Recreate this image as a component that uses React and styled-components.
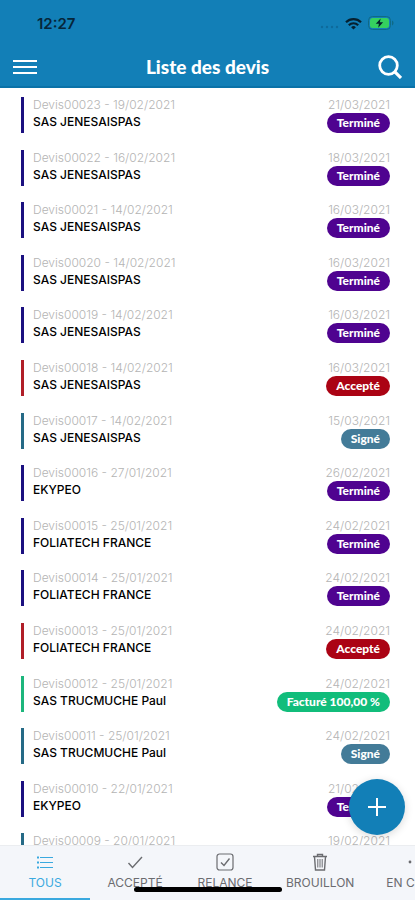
import React, { useState } from 'react';
import styled, { createGlobalStyle } from 'styled-components';

const GlobalStyle = createGlobalStyle`
  * {
    box-sizing: border-box;
  }

  body {
    margin: 0;
    background-color: #ffffff;
    font-family: Inter, "Liberation Sans", sans-serif;
  }

  button {
    border: none;
    padding: 0;
    background: none;
    font-family: inherit;
    cursor: pointer;
  }
`;

const Screen = styled.div`
  display: flex;
  flex-direction: column;
  min-height: 100vh;
`;

const Header = styled.header`
  position: sticky;
  top: 0;
  z-index: 1;
  background-color: #127fb7;
  border-bottom: 2px solid #0a72a8;
`;

const StatusBar = styled.div`
  display: flex;
  justify-content: space-between;
  align-items: center;
  height: 46px;
  padding: 0 21px 0 37px;
`;

const Clock = styled.span`
  font-size: 15px;
  font-weight: 600;
  color: #06263a;
`;

const StatusIcons = styled.div`
  display: flex;
  align-items: center;
  gap: 6px;
`;

const TitleBar = styled.div`
  display: grid;
  grid-template-columns: 26px 1fr 26px;
  align-items: center;
  height: 40px;
  padding: 2px 12px 0;
`;

const Title = styled.h1`
  margin: 0;
  text-align: center;
  font-family: Lato, sans-serif;
  font-size: 19px;
  font-weight: 900;
  line-height: 24px;
  color: #ffffff;
`;

const IconButton = styled.button`
  display: flex;
  justify-content: center;
  align-items: center;
  height: 26px;
  color: #ffffff;
`;

const List = styled.ul`
  display: flex;
  flex: 1;
  flex-direction: column;
  margin: 0;
  padding: 9px 25px 14px 21px;
  list-style: none;
`;

const Row = styled.li`
  display: flex;
  flex: 1;
  align-items: flex-start;
  min-height: 52px;
`;

const RowContent = styled.div`
  display: flex;
  flex: 1;
  justify-content: space-between;
  height: 36px;
  padding-left: 9px;
  border-left: 3px solid ${(props) => props.$color};
`;

const Column = styled.div`
  display: flex;
  flex-direction: column;
  align-items: ${(props) => props.$align};
`;

const Muted = styled.span`
  font-size: 12px;
  font-weight: 300;
  line-height: 16px;
  color: #b4b4b4;
`;

const Client = styled.span`
  font-size: 12px;
  font-weight: 500;
  line-height: 18px;
  color: #000000;
`;

const Badge = styled.span`
  height: 20px;
  padding: 0 10px;
  border-radius: 10px;
  background-color: ${(props) => props.$color};
  font-family: Lato, sans-serif;
  font-size: 12px;
  font-weight: 900;
  line-height: 20px;
  color: #ffffff;
`;

const AddButton = styled.button`
  position: fixed;
  right: 10px;
  bottom: 65px;
  z-index: 1;
  display: flex;
  justify-content: center;
  align-items: center;
  width: 56px;
  height: 56px;
  border-radius: 28px;
  background-color: #127fb7;
  box-shadow: 0 2px 8px rgba(0, 0, 0, 0.15);
  color: #ffffff;
`;

const TabBar = styled.nav`
  position: fixed;
  right: 0;
  bottom: 0;
  left: 0;
  display: flex;
  overflow: hidden;
  background-color: #f4f6fa;
  border-top: 1px solid #ebedf0;
`;

const Tab = styled.button`
  display: flex;
  flex-direction: column;
  flex-shrink: 0;
  align-items: center;
  gap: 3px;
  min-width: 90px;
  height: 54px;
  padding: 6px 16px 0;
  border-bottom: 2px solid ${(props) => (props.$active ? '#3aa9df' : 'transparent')};
  font-size: 12px;
  line-height: 16px;
  color: ${(props) => (props.$active ? '#3aa9df' : '#6b6c70')};
`;

const HomeIndicator = styled.div`
  position: fixed;
  bottom: 8px;
  left: 50%;
  width: 148px;
  height: 5px;
  margin-left: -74px;
  border-radius: 3px;
  background-color: #000000;
`;

const COLORS = {
  termine: { bar: '#1b1080', badge: '#4f0390' },
  accepte: { bar: '#b01e28', badge: '#ab0314' },
  signe: { bar: '#256a86', badge: '#437b98' },
  facture: { bar: '#1cb67c', badge: '#11bd7b' },
};

const LABELS = {
  termine: 'Terminé',
  accepte: 'Accepté',
  signe: 'Signé',
  facture: 'Facturé 100,00 %',
};

const quotes = [
  { id: '00023', date: '19/02/2021', client: 'SAS JENESAISPAS', end: '21/03/2021', status: 'termine' },
  { id: '00022', date: '16/02/2021', client: 'SAS JENESAISPAS', end: '18/03/2021', status: 'termine' },
  { id: '00021', date: '14/02/2021', client: 'SAS JENESAISPAS', end: '16/03/2021', status: 'termine' },
  { id: '00020', date: '14/02/2021', client: 'SAS JENESAISPAS', end: '16/03/2021', status: 'termine' },
  { id: '00019', date: '14/02/2021', client: 'SAS JENESAISPAS', end: '16/03/2021', status: 'termine' },
  { id: '00018', date: '14/02/2021', client: 'SAS JENESAISPAS', end: '16/03/2021', status: 'accepte' },
  { id: '00017', date: '14/02/2021', client: 'SAS JENESAISPAS', end: '15/03/2021', status: 'signe' },
  { id: '00016', date: '27/01/2021', client: 'EKYPEO', end: '26/02/2021', status: 'termine' },
  { id: '00015', date: '25/01/2021', client: 'FOLIATECH FRANCE', end: '24/02/2021', status: 'termine' },
  { id: '00014', date: '25/01/2021', client: 'FOLIATECH FRANCE', end: '24/02/2021', status: 'termine' },
  { id: '00013', date: '25/01/2021', client: 'FOLIATECH FRANCE', end: '24/02/2021', status: 'accepte' },
  { id: '00012', date: '25/01/2021', client: 'SAS TRUCMUCHE Paul', end: '24/02/2021', status: 'facture' },
  { id: '00011', date: '25/01/2021', client: 'SAS TRUCMUCHE Paul', end: '24/02/2021', status: 'signe' },
  { id: '00010', date: '22/01/2021', client: 'EKYPEO', end: '21/02/2021', status: 'termine' },
  { id: '00009', date: '20/01/2021', client: 'EKYPEO', end: '19/02/2021', status: 'signe' },
];

const SignalIcon = () => (
  <svg width="19" height="16" viewBox="0 0 19 16" fill="#0f6a9b" aria-hidden="true">
    <circle cx="2" cy="12" r="1.2" />
    <circle cx="7" cy="12" r="1.2" />
    <circle cx="12" cy="12" r="1.2" />
    <circle cx="17" cy="12" r="1.2" />
  </svg>
);

const WifiIcon = () => (
  <svg width="17" height="13" viewBox="0 0 17 13" fill="none" stroke="#06202f" strokeWidth="2.2" aria-hidden="true">
    <path d="M1 5.2a10.6 10.6 0 0 1 15 0" />
    <path d="M3.8 8.2a6.7 6.7 0 0 1 9.4 0" />
    <path d="M8.5 12.6 6.1 10.2a3.5 3.5 0 0 1 4.8 0z" fill="#06202f" stroke="none" />
  </svg>
);

const BatteryIcon = () => (
  <svg width="26" height="14" viewBox="0 0 26 14" aria-hidden="true">
    <rect x="0.5" y="0.5" width="22" height="13" rx="4" fill="none" stroke="#0f6a86" />
    <path d="M24 4.5c2 .8 2 4.2 0 5z" fill="#0f6a86" />
    <rect x="2" y="2" width="19" height="10" rx="2.5" fill="#35d05f" />
    <path d="M12.6 2.4 7.8 7.7h3.1l-.7 4 4.9-5.4h-3.2z" fill="#04202c" />
  </svg>
);

const MenuIcon = () => (
  <svg width="24" height="16" viewBox="0 0 24 16" stroke="currentColor" strokeWidth="2.2" aria-hidden="true">
    <path d="M0 2h24M0 8h24M0 14h24" />
  </svg>
);

const SearchIcon = () => (
  <svg width="24" height="24" viewBox="0 0 24 24" fill="none" stroke="currentColor" strokeWidth="2.8" aria-hidden="true">
    <circle cx="10.5" cy="10.5" r="8.8" />
    <path d="m16.6 16.6 6.4 6.4" strokeWidth="3.2" />
  </svg>
);

const PlusIcon = () => (
  <svg width="18" height="18" viewBox="0 0 18 18" stroke="currentColor" strokeWidth="2" aria-hidden="true">
    <path d="M9 0v18M0 9h18" />
  </svg>
);

const tabIconProps = {
  width: 20,
  height: 20,
  viewBox: '0 0 20 20',
  fill: 'none',
  stroke: 'currentColor',
  'aria-hidden': true,
};

const ListIcon = () => (
  <svg {...tabIconProps}>
    <path d="M5 5.5h13M5 10.5h13M5 15.5h13" />
    <path d="M2 5.5h2M2 10.5h2M2 15.5h2" strokeWidth="2" />
  </svg>
);

const CheckIcon = () => (
  <svg {...tabIconProps}>
    <path d="m3.5 11 4 4.5L17 5" strokeWidth="1.4" />
  </svg>
);

const CheckBoxIcon = () => (
  <svg {...tabIconProps}>
    <rect x="2" y="2" width="16" height="16" rx="2.5" strokeWidth="1.2" />
    <path d="m6 10.5 3 3 5.5-7" strokeWidth="1.4" />
  </svg>
);

const TrashIcon = () => (
  <svg {...tabIconProps}>
    <path d="M3 4.5h14M7.5 4.5v-2h5v2M4.5 4.5l1 13.5h9l1-13.5" strokeWidth="1.4" />
    <path d="M7.8 7v8.5M10 7v8.5M12.2 7v8.5" />
  </svg>
);

const DotsIcon = () => (
  <svg {...tabIconProps} fill="currentColor" stroke="none">
    <circle cx="3" cy="10" r="1.4" />
    <circle cx="10" cy="10" r="1.4" />
    <circle cx="17" cy="10" r="1.4" />
  </svg>
);

const tabs = [
  { label: 'TOUS', icon: <ListIcon /> },
  { label: 'ACCEPTÉ', icon: <CheckIcon /> },
  { label: 'RELANCE', icon: <CheckBoxIcon /> },
  { label: 'BROUILLON', icon: <TrashIcon /> },
  { label: 'EN COURS', icon: <DotsIcon /> },
];

const QuoteRow = ({ quote }) => {
  const colors = COLORS[quote.status];

  return (
    <Row>
      <RowContent $color={colors.bar}>
        <Column $align="flex-start">
          <Muted>{`Devis${quote.id} - ${quote.date}`}</Muted>
          <Client>{quote.client}</Client>
        </Column>
        <Column $align="flex-end">
          <Muted>{quote.end}</Muted>
          <Badge $color={colors.badge}>{LABELS[quote.status]}</Badge>
        </Column>
      </RowContent>
    </Row>
  );
};

const App = () => {
  const [activeTab, setActiveTab] = useState('TOUS');

  return (
    <Screen>
      <GlobalStyle />
      <Header>
        <StatusBar>
          <Clock>12:27</Clock>
          <StatusIcons>
            <SignalIcon />
            <WifiIcon />
            <BatteryIcon />
          </StatusIcons>
        </StatusBar>
        <TitleBar>
          <IconButton aria-label="Menu">
            <MenuIcon />
          </IconButton>
          <Title>Liste des devis</Title>
          <IconButton aria-label="Rechercher">
            <SearchIcon />
          </IconButton>
        </TitleBar>
      </Header>
      <List>
        {quotes.map((quote) => (
          <QuoteRow key={quote.id} quote={quote} />
        ))}
      </List>
      <AddButton aria-label="Ajouter un devis">
        <PlusIcon />
      </AddButton>
      <TabBar>
        {tabs.map(({ label, icon }) => (
          <Tab key={label} $active={label === activeTab} onClick={() => setActiveTab(label)}>
            {icon}
            {label}
          </Tab>
        ))}
      </TabBar>
      <HomeIndicator />
    </Screen>
  );
};

export default App;
